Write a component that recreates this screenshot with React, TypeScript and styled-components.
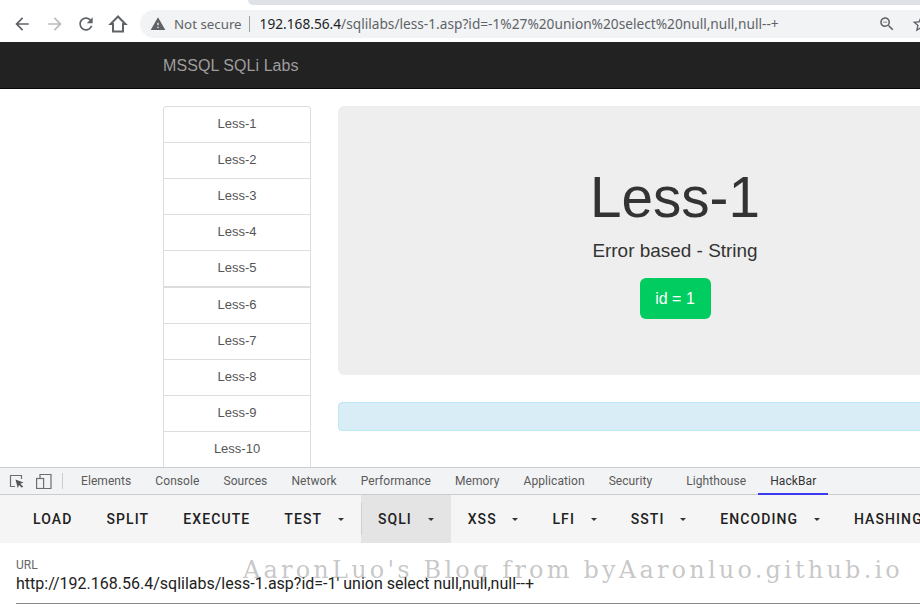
import React from 'react';
import styled, { createGlobalStyle } from 'styled-components';

const GlobalStyle = createGlobalStyle`
  html, body {
    margin: 0;
    padding: 0;
    background: #fff;
    overflow: hidden;
  }
`;

const Screen = styled.div`
  position: relative;
  width: 920px;
  height: 607px;
  overflow: hidden;
  display: flex;
  flex-direction: column;
  background: #fff;
`;

/* Browser chrome */
const TabStrip = styled.div`
  height: 5px;
  flex: none;
  padding-left: 248px;
  background: #fff;
`;

const ActiveTabEdge = styled.div`
  height: 5px;
  background: #dee1e6;
  border-bottom-left-radius: 6px;
`;

const BrowserBar = styled.div`
  height: 37px;
  flex: none;
  display: flex;
  align-items: center;
  padding-left: 12px;
  background: #fff;
`;

const NavButton = styled.div<{ $gap: number }>`
  width: 20px;
  height: 20px;
  flex: none;
  margin-right: ${(props) => props.$gap}px;
  display: flex;
`;

const Omnibox = styled.div`
  flex: 1;
  min-width: 0;
  height: 28px;
  display: flex;
  align-items: center;
  padding-left: 10px;
  border-radius: 14px 0 0 14px;
  background: #f1f3f4;
  font-family: 'Noto Sans', sans-serif;
  font-size: 13.7px;
  white-space: nowrap;
`;

const SecurityLabel = styled.span`
  margin-left: 8px;
  font-size: 13.3px;
  color: #5f6368;
`;

const Divider = styled.span`
  width: 1px;
  height: 16px;
  margin: 0 10px 0 7px;
  background: #9aa0a6;
`;

const Host = styled.span`
  color: #202124;
`;

const UrlRest = styled.span`
  color: #5f6368;
`;

const OmniboxIcons = styled.div`
  margin-left: auto;
  width: 42px;
  display: flex;
  align-items: center;
  gap: 15px;
`;

const OmniboxIconSlot = styled.div`
  flex: none;
  display: flex;
`;

/* Page */
const Navbar = styled.div`
  height: 46px;
  flex: none;
  box-sizing: content-box;
  display: flex;
  align-items: center;
  padding-left: 163px;
  background: #222;
  border-bottom: 1px solid #080808;
  color: #9d9d9d;
  font-family: 'Liberation Sans', Arial, sans-serif;
  font-size: 16px;
  letter-spacing: 0.07px;
`;

const NavbarBrand = styled.span`
  margin-top: 2px;
`;

const Page = styled.div`
  height: 378px;
  flex: none;
  box-sizing: border-box;
  overflow: hidden;
  display: flex;
  gap: 27px;
  padding: 17px 0 0 163px;
  font-family: 'Liberation Sans', Arial, sans-serif;
`;

const SideList = styled.div`
  width: 148px;
  flex: none;
  align-self: flex-start;
  box-sizing: border-box;
  border: 1px solid #ddd;
  border-bottom: 0;
  border-radius: 4px 4px 0 0;
`;

const SideItem = styled.div<{ $thick?: boolean }>`
  height: ${(props) => (props.$thick ? 37 : 36)}px;
  box-sizing: border-box;
  padding-bottom: 2px;
  display: flex;
  align-items: center;
  justify-content: center;
  border-bottom: ${(props) => (props.$thick ? 2 : 1)}px solid #ddd;
  color: #555;
  font-size: 13px;
`;

const MainColumn = styled.div`
  width: 674px;
  flex: none;
  display: flex;
  flex-direction: column;
  gap: 27px;
`;

const Jumbotron = styled.div`
  height: 269px;
  box-sizing: border-box;
  padding-top: 57px;
  display: flex;
  flex-direction: column;
  align-items: center;
  border-radius: 6px;
  background: #eee;
  color: #333;
`;

const Heading = styled.h1`
  margin: 0;
  font-size: 56.6px;
  font-weight: 400;
  line-height: 69px;
`;

const Subtitle = styled.p`
  margin: 5px 0 0;
  font-size: 18.95px;
  line-height: 27px;
`;

const IdBadge = styled.div`
  margin-top: 14px;
  width: 71px;
  height: 41px;
  display: flex;
  align-items: center;
  justify-content: center;
  border-radius: 6px;
  background: #00cc60;
  color: #fff;
  font-size: 16px;
`;

const InfoAlert = styled.div`
  height: 29px;
  box-sizing: border-box;
  border: 1px solid #bce8f1;
  border-radius: 4px;
  background: #d9edf7;
`;

/* Devtools */
const DevtoolsTabs = styled.div`
  height: 28px;
  flex: none;
  box-sizing: border-box;
  display: flex;
  align-items: stretch;
  padding-left: 9px;
  background: #f2f3f5;
  border-top: 1px solid #ccc;
  border-bottom: 1px solid #ccc;
  font-family: Roboto, sans-serif;
  font-size: 12px;
  letter-spacing: 0.075px;
`;

const DevtoolIcon = styled.div<{ $gap: number }>`
  width: 18px;
  flex: none;
  display: flex;
  align-items: center;
  margin-right: ${(props) => props.$gap}px;
`;

const ToolSeparator = styled.div`
  width: 1px;
  height: 16px;
  flex: none;
  align-self: center;
  margin-right: 6px;
  background: #ccc;
`;

const DevtoolTab = styled.div<{ $active?: boolean; $left?: number }>`
  padding: 0 12px;
  margin-left: ${(props) => props.$left ?? 0}px;
  display: flex;
  align-items: center;
  margin-bottom: -1px;
  color: ${(props) => (props.$active ? '#333' : '#5a5a5a')};
  border-bottom: 2px solid ${(props) => (props.$active ? '#3b3bf0' : 'transparent')};
`;

const HackToolbar = styled.div`
  height: 48px;
  flex: none;
  display: flex;
  align-items: stretch;
  background: #f5f5f5;
  padding-left: 16px;
  white-space: nowrap;
  font-family: Roboto, sans-serif;
  font-size: 14px;
  font-weight: 500;
  letter-spacing: 1.1px;
  color: #212121;
`;

const HackButton = styled.div<{ $active?: boolean }>`
  position: relative;
  padding: 0 17px;
  flex: none;
  display: flex;
  align-items: center;
  background: ${(props) => (props.$active ? '#e4e4e4' : 'transparent')};

  /* Divider in front of the active menu */
  ${(props) =>
    props.$active &&
    `
    &::before {
      content: '';
      position: absolute;
      left: 0;
      top: 8px;
      bottom: 8px;
      width: 1px;
      background: #cfcfcf;
    }
  `}
`;

const Caret = styled.span`
  width: 0;
  height: 0;
  margin-left: 15.7px;
  border-left: 3.5px solid transparent;
  border-right: 3.5px solid transparent;
  border-top: 3.5px solid #333;
`;

const UrlField = styled.div`
  flex: 1;
  padding: 14px 0 0 16px;
  font-family: Roboto, sans-serif;
`;

const FieldLabel = styled.div`
  font-size: 12px;
  line-height: 16px;
  color: #666;
`;

const FieldValue = styled.div`
  font-size: 16px;
  line-height: 22px;
  color: #222;
  padding-bottom: 8px;
  border-bottom: 1px solid #8a8a8a;
`;

const Watermark = styled.div`
  position: absolute;
  left: 243px;
  top: 555px;
  font-family: 'DejaVu Serif', serif;
  font-size: 24px;
  line-height: 30px;
  letter-spacing: 3.2px;
  color: rgba(130, 130, 130, 0.45);
  white-space: nowrap;
`;

const lessons = ['Less-1', 'Less-2', 'Less-3', 'Less-4', 'Less-5', 'Less-6', 'Less-7', 'Less-8', 'Less-9', 'Less-10'];
const tabs = ['Elements', 'Console', 'Sources', 'Network', 'Performance', 'Memory', 'Application', 'Security'];

const Icon: React.FC<{ d: string; fill: string; size?: number }> = ({ d, fill, size = 20 }) => (
  <svg width={size} height={size} viewBox="0 0 24 24" fill={fill}>
    <path d={d} />
  </svg>
);

export default function App() {
  return (
    <Screen>
      <GlobalStyle />
      <TabStrip>
        <ActiveTabEdge />
      </TabStrip>
      <BrowserBar>
        <NavButton $gap={13}>
          <Icon fill="#5f6368" d="M20 11H7.83l5.59-5.59L12 4l-8 8 8 8 1.41-1.41L7.83 13H20v-2z" />
        </NavButton>
        <NavButton $gap={11}>
          <Icon fill="#babcbe" d="M4 11h12.17l-5.59-5.59L12 4l8 8-8 8-1.41-1.41L16.17 13H4v-2z" />
        </NavButton>
        <NavButton $gap={12}>
          <Icon fill="#5f6368" d="M17.65 6.35C16.2 4.9 14.21 4 12 4c-4.42 0-7.99 3.58-7.99 8s3.57 8 7.99 8c3.73 0 6.84-2.55 7.73-6h-2.08c-.82 2.33-3.04 4-5.65 4-3.31 0-6-2.69-6-6s2.69-6 6-6c1.66 0 3.14.69 4.22 1.78L13 11h7V4l-2.35 2.35z" />
        </NavButton>
        <NavButton $gap={12}>
          <svg width="20" height="20" viewBox="0 0 20 20" fill="none" stroke="#5f6368" strokeWidth="2">
            <path d="M10 2.5L2.6 10H5v7.5h10V10h2.4z" />
          </svg>
        </NavButton>
        <Omnibox>
          <Icon size={16} fill="#5f6368" d="M1 21h22L12 2 1 21zm12-3h-2v-2h2v2zm0-4h-2v-4h2v4z" />
          <SecurityLabel>Not secure</SecurityLabel>
          <Divider />
          <Host>192.168.56.4</Host>
          <UrlRest>/sqlilabs/less-1.asp?id=-1%27%20union%20select%20null,null,null--+</UrlRest>
          <OmniboxIcons>
            <OmniboxIconSlot>
              <Icon size={18} fill="#5f6368" d="M15.5 14h-.79l-.28-.27C15.41 12.59 16 11.11 16 9.5 16 5.91 13.09 3 9.5 3S3 5.91 3 9.5 5.91 16 9.5 16c1.61 0 3.09-.59 4.23-1.57l.27.28v.79l5 4.99L20.49 19l-4.99-5zm-6 0C7.01 14 5 11.99 5 9.5S7.01 5 9.5 5 14 7.01 14 9.5 11.99 14 9.5 14zM7 9h5v1H7z" />
            </OmniboxIconSlot>
            <OmniboxIconSlot>
              <Icon size={20} fill="#5f6368" d="M22 9.24l-7.19-.62L12 2 9.19 8.63 2 9.24l5.46 4.73L5.82 21 12 17.27 18.18 21l-1.63-7.03L22 9.24zM12 15.4l-3.76 2.27 1-4.28-3.32-2.88 4.38-.38L12 6.1l1.71 4.04 4.38.38-3.32 2.88 1 4.28L12 15.4z" />
            </OmniboxIconSlot>
          </OmniboxIcons>
        </Omnibox>
      </BrowserBar>

      <Navbar>
        <NavbarBrand>MSSQL SQLi Labs</NavbarBrand>
      </Navbar>
      <Page>
        <SideList>
          {lessons.map((lesson, i) => (
            <SideItem key={lesson} $thick={i === 4}>
              {lesson}
            </SideItem>
          ))}
        </SideList>
        <MainColumn>
          <Jumbotron>
            <Heading>Less-1</Heading>
            <Subtitle>Error based - String</Subtitle>
            <IdBadge>id = 1</IdBadge>
          </Jumbotron>
          <InfoAlert />
        </MainColumn>
      </Page>

      <DevtoolsTabs>
        <DevtoolIcon $gap={9}>
          <svg width="16" height="16" viewBox="0 0 16 16" fill="none">
            <path d="M6 13.5H1.5v-11h11V6" stroke="#6e6e6e" strokeWidth="1.2" />
            <path d="M6.5 6.5l8 3-3.2 1.2 2.8 2.8-1.3 1.3-2.8-2.8-1.2 3.2z" fill="#555" />
          </svg>
        </DevtoolIcon>
        <DevtoolIcon $gap={8}>
          <svg width="16" height="16" viewBox="0 0 16 16" fill="none" stroke="#6e6e6e" strokeWidth="1.2">
            <path d="M4 5V1.5h11v14H8" />
            <rect x="0.6" y="5.5" width="7" height="10" />
          </svg>
        </DevtoolIcon>
        <ToolSeparator />
        {tabs.map((tab) => (
          <DevtoolTab key={tab}>{tab}</DevtoolTab>
        ))}
        <DevtoolTab $left={10}>Lighthouse</DevtoolTab>
        <DevtoolTab $active>HackBar</DevtoolTab>
      </DevtoolsTabs>

      <HackToolbar>
        <HackButton>LOAD</HackButton>
        <HackButton>SPLIT</HackButton>
        <HackButton>EXECUTE</HackButton>
        <HackButton>TEST<Caret /></HackButton>
        <HackButton $active>SQLI<Caret /></HackButton>
        <HackButton>XSS<Caret /></HackButton>
        <HackButton>LFI<Caret /></HackButton>
        <HackButton>SSTI<Caret /></HackButton>
        <HackButton>ENCODING<Caret /></HackButton>
        <HackButton>HASHING<Caret /></HackButton>
      </HackToolbar>

      <UrlField>
        <FieldLabel>URL</FieldLabel>
        <FieldValue>http://192.168.56.4/sqlilabs/less-1.asp?id=-1' union select null,null,null--+</FieldValue>
      </UrlField>

      <Watermark>AaronLuo's Blog from byAaronluo.github.io</Watermark>
    </Screen>
  );
}
